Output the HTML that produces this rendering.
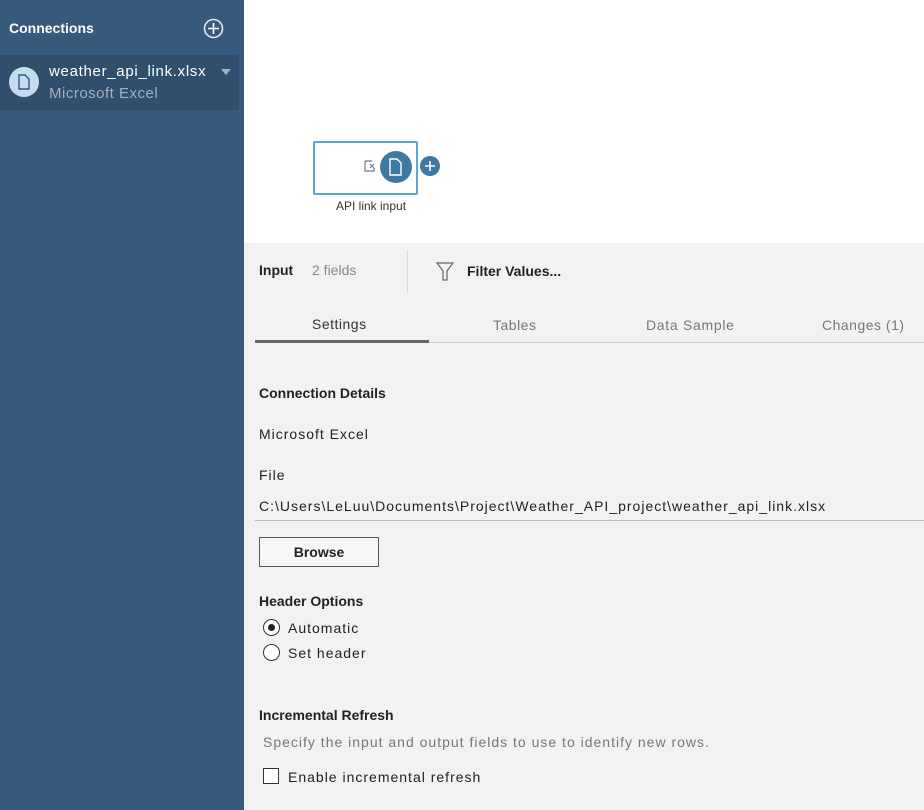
<!DOCTYPE html>
<html><head><style>
body{margin:0;width:924px;height:810px;overflow:hidden;font-family:"Liberation Sans",sans-serif;position:relative;background:#f2f2f2}
.a{position:absolute;white-space:nowrap}
.r{letter-spacing:1px}
</style></head><body>
<div class="a" style="left:0;top:0;width:244px;height:810px;background:#355a7c"></div>
<div class="a" style="left:9px;top:20px;color:#fff;font-weight:bold;font-size:14px">Connections</div>
<svg class="a" style="left:203px;top:18px" width="21" height="21"><circle cx="10.5" cy="10.5" r="9" fill="none" stroke="#dfe6ee" stroke-width="1.6"/><path d="M10.5 5v11M5 10.5h11" stroke="#fff" stroke-width="1.6"/></svg>
<div class="a" style="left:0;top:55px;width:239px;height:55px;background:#2f4f6d"></div>
<div class="a" style="left:9px;top:67px;width:30px;height:30px;border-radius:50%;background:#c5dcef"></div>
<svg class="a" style="left:16px;top:73px" width="16" height="18"><path d="M3 2h6l4 4v10H3z" fill="none" stroke="#355a7c" stroke-width="1.4"/></svg>
<div class="a" style="left:49px;top:63px;color:#fff;font-size:15px;letter-spacing:0.7px">weather_api_link.xlsx</div>
<div class="a" style="left:49px;top:85px;color:#9fb1c2;font-size:15px;letter-spacing:0.5px">Microsoft Excel</div>
<div class="a" style="left:221px;top:69px;width:0;height:0;border-left:5px solid transparent;border-right:5px solid transparent;border-top:6px solid #9fb1c2"></div>
<div class="a" style="left:244px;top:0;width:680px;height:243px;background:#fff"></div>
<div class="a" style="left:313px;top:141px;width:101px;height:50px;border:2px solid #5aa6e0;border-radius:2px;background:#fff"></div>
<svg class="a" style="left:364px;top:160px" width="12" height="12"><path d="M1 1h7M1 1v10h9v-3" fill="none" stroke="#777" stroke-width="1.2"/><path d="M6 4l4 4M10 4l-4 4" stroke="#777" stroke-width="1.2"/></svg>
<div class="a" style="left:380px;top:151px;width:32px;height:32px;border-radius:50%;background:#3f79a1"></div>
<svg class="a" style="left:387px;top:157px" width="18" height="20"><path d="M3 2h7l4 4v12H3z" fill="none" stroke="#fff" stroke-width="1.4"/></svg>
<div class="a" style="left:420px;top:156px;width:20px;height:20px;border-radius:50%;background:#3f79a1"></div>
<svg class="a" style="left:420px;top:156px" width="20" height="20"><path d="M10 5v10M5 10h10" stroke="#fff" stroke-width="1.6"/></svg>
<div class="a" style="left:336px;top:199px;font-size:12px;color:#333">API link input</div>
<div class="a" style="left:259px;top:262px;font-size:14px;font-weight:bold;color:#222">Input</div>
<div class="a" style="left:312px;top:262px;font-size:14px;color:#888">2 fields</div>
<div class="a" style="left:407px;top:250px;width:1px;height:42px;background:#d8d8d8"></div>
<svg class="a" style="left:436px;top:262px" width="18" height="20"><path d="M1 1h16l-6 8v9h-4v-9z" fill="none" stroke="#666" stroke-width="1.2"/></svg>
<div class="a" style="left:467px;top:263px;font-size:14px;font-weight:bold;color:#222">Filter Values...</div>
<div class="a" style="left:312px;top:316px;font-size:14px;color:#333;letter-spacing:0.5px">Settings</div>
<div class="a" style="left:493px;top:317px;font-size:14px;color:#777;letter-spacing:0.5px">Tables</div>
<div class="a" style="left:646px;top:317px;font-size:14px;color:#777;letter-spacing:0.7px">Data Sample</div>
<div class="a" style="left:822px;top:317px;font-size:14px;color:#777;letter-spacing:0.5px">Changes (1)</div>
<div class="a" style="left:255px;top:342px;width:669px;height:1px;background:#ccc"></div>
<div class="a" style="left:255px;top:340px;width:174px;height:3px;background:#666"></div>
<div class="a" style="left:259px;top:385px;font-size:14px;font-weight:bold;color:#222">Connection Details</div>
<div class="a r" style="left:259px;top:426px;font-size:14px;color:#222">Microsoft Excel</div>
<div class="a r" style="left:259px;top:467px;font-size:14px;color:#222">File</div>
<div class="a r" style="left:259px;top:498px;font-size:14px;color:#222">C:\Users\LeLuu\Documents\Project\Weather_API_project\weather_api_link.xlsx</div>
<div class="a" style="left:255px;top:520px;width:669px;height:1px;background:#bbb"></div>
<div class="a" style="left:259px;top:537px;width:118px;height:28px;border:1px solid #555;background:#f7f7f7;font-size:14px;font-weight:bold;text-align:center;line-height:28px;color:#222">Browse</div>
<div class="a" style="left:259px;top:593px;font-size:14px;font-weight:bold;color:#222">Header Options</div>
<div class="a" style="left:263px;top:619px;width:15px;height:15px;border:1px solid #333;border-radius:50%;background:#fff"></div>
<div class="a" style="left:268px;top:624px;width:7px;height:7px;border-radius:50%;background:#222"></div>
<div class="a r" style="left:288px;top:620px;font-size:14px;color:#222">Automatic</div>
<div class="a" style="left:263px;top:644px;width:15px;height:15px;border:1px solid #333;border-radius:50%;background:#fff"></div>
<div class="a r" style="left:288px;top:645px;font-size:14px;color:#222">Set header</div>
<div class="a" style="left:259px;top:707px;font-size:14px;font-weight:bold;color:#222">Incremental Refresh</div>
<div class="a r" style="left:263px;top:734px;font-size:14px;color:#777">Specify the input and output fields to use to identify new rows.</div>
<div class="a" style="left:263px;top:768px;width:14px;height:14px;border:1px solid #333;background:#fff"></div>
<div class="a r" style="left:288px;top:769px;font-size:14px;color:#222">Enable incremental refresh</div>
</body></html>
